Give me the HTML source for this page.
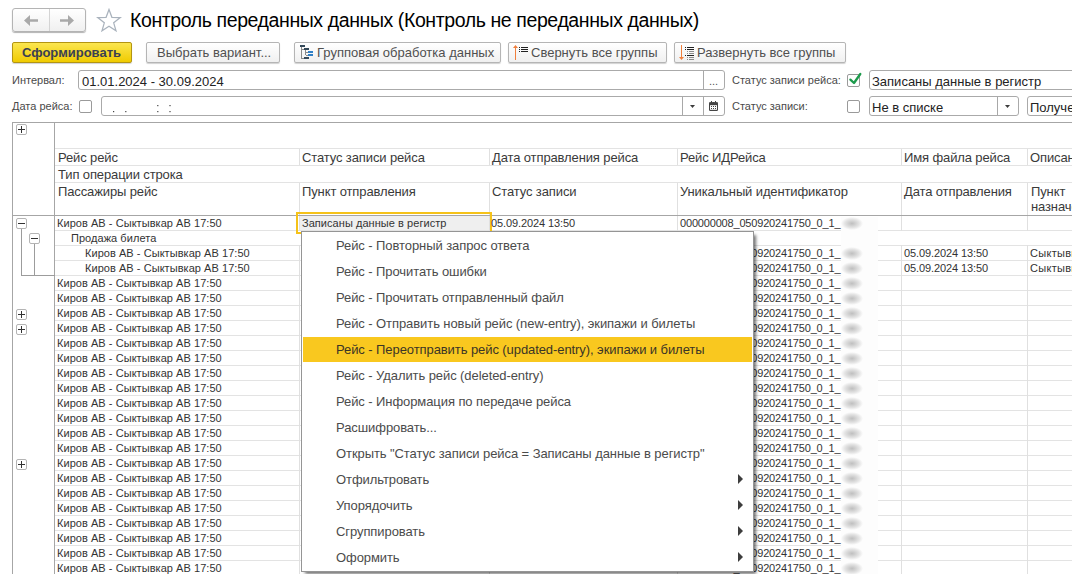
<!DOCTYPE html>
<html><head><meta charset="utf-8">
<style>
*{box-sizing:border-box}
html,body{margin:0;padding:0;background:#fff}
body{width:1072px;height:574px;overflow:hidden;position:relative;font-family:"Liberation Sans",sans-serif;color:#333}
.a{position:absolute}
.t{position:absolute;white-space:nowrap}
.btn{position:absolute;top:42px;height:21px;border:1px solid #b5b5b5;border-radius:2px;background:linear-gradient(#fff,#f0f0f0);box-shadow:0 1px 1px rgba(0,0,0,.18);font-size:13px;line-height:19px;color:#505050;white-space:nowrap}
.fld{position:absolute;border:1px solid #aaa;border-radius:3px;background:#fff;height:20px}
.lbl{position:absolute;font-size:11px;color:#4a4a4a;white-space:nowrap;line-height:13px}
.cb{position:absolute;width:13px;height:13px;border:1px solid #9a9a9a;border-radius:2px;background:#fff}
.hl{position:absolute;height:1px;background:#e0e0e0}
.vl{position:absolute;width:1px;background:#e0e0e0}
.row{position:absolute;left:57px;font-size:11px;line-height:15px;color:#333;white-space:nowrap}
.mi{position:absolute;left:336px;font-size:13px;line-height:26px;color:#4a4a4a;white-space:nowrap}

.pb{position:absolute;width:11px;height:11px;border:1px solid #b4b4b4;border-radius:2px;background:#fff}
.pb:before{content:"";position:absolute;left:1px;top:4px;width:7px;height:1px;background:#333}
.pb.p:after{content:"";position:absolute;left:4px;top:1px;width:1px;height:7px;background:#333}
.ht{position:absolute;font-size:13px;line-height:16px;color:#3a3a3a;white-space:nowrap;letter-spacing:-0.12px}
.bt{position:absolute;font-size:11px;line-height:15px;color:#333;white-space:nowrap;letter-spacing:0.05px}
.blob{position:absolute;left:841px;width:22px;height:13px;background:radial-gradient(closest-side,rgba(170,170,170,.75),rgba(170,170,170,.3) 65%,rgba(170,170,170,0))}

.menu{position:absolute;left:301px;top:231px;width:453px;height:341px;border:1px solid #959595;background:#fff;box-shadow:3px 3px 3px -1px rgba(0,0,0,.55)}
.mi{position:absolute;left:336px;font-size:13px;line-height:26px;color:#4b4b4b;white-space:nowrap;letter-spacing:-0.08px}
.arr{position:absolute;left:738px;width:0;height:0;border-left:5px solid #3d3d3d;border-top:5px solid transparent;border-bottom:5px solid transparent}
</style></head><body>

<!-- nav buttons -->
<div class="a" style="left:12px;top:8px;width:74px;height:24px;border:1px solid #b4b4b4;border-radius:3px;background:linear-gradient(#fff,#f0f0f0);box-shadow:0 1px 1px rgba(0,0,0,.3)"></div>
<div class="a" style="left:49px;top:9px;width:1px;height:22px;background:#d4d4d4"></div>
<svg class="a" style="left:0;top:0" width="90" height="40"><path d="M24 20.5 L30 15 L30 19.2 L38 19.2 L38 21.8 L30 21.8 L30 26 Z" fill="#a9a9a9"/><path d="M74 20.5 L68 15 L68 19.2 L60 19.2 L60 21.8 L68 21.8 L68 26 Z" fill="#a9a9a9"/></svg>
<!-- star -->
<svg class="a" style="left:96px;top:8px" width="26" height="24" viewBox="0 0 26 24"><path d="M13 1.5 L15.9 9.3 L24.3 9.6 L17.7 14.8 L20 22.8 L13 18.2 L6 22.8 L8.3 14.8 L1.7 9.6 L10.1 9.3 Z" fill="none" stroke="#aab3bd" stroke-width="1.25"/></svg>
<div class="t" style="left:130px;top:9px;font-size:19.5px;line-height:22px;color:#000;letter-spacing:-0.4px">Контроль переданных данных (Контроль не переданных данных)</div>

<!-- toolbar -->
<div class="btn" style="left:12px;width:120px;border-color:#b39512;background:linear-gradient(#fbe650,#f0cb00);font-weight:bold;color:#3a4052;padding-left:9px">Сформировать</div>
<div class="btn" style="left:146px;width:134px;padding-left:10px">Выбрать вариант...</div>
<div class="btn" style="left:294px;width:207px;padding-left:22px">Групповая обработка данных</div>
<div class="btn" style="left:508px;width:159px;padding-left:22px">Свернуть все группы</div>
<div class="btn" style="left:674px;width:172px;padding-left:22px">Развернуть все группы</div>

<!-- toolbar icons -->
<svg class="a" style="left:0;top:0" width="700" height="64" shape-rendering="crispEdges">
<g fill="#8a8a8a"><rect x="301" y="47" width="1" height="11"/><rect x="301" y="58" width="3" height="1"/><rect x="302" y="49" width="2" height="1"/><rect x="305" y="50" width="1" height="5"/><rect x="306" y="52" width="2" height="1"/><rect x="306" y="55" width="2" height="1"/></g>
<g fill="#34495a"><rect x="300" y="45" width="5" height="2"/><rect x="304" y="48" width="5" height="2"/><rect x="304" y="57" width="5" height="2"/></g>
<g fill="#2f7fc6"><rect x="308" y="51" width="5" height="2"/><rect x="308" y="54" width="5" height="2"/></g>
<g fill="#222"><rect x="519" y="47" width="1" height="1"/><rect x="521" y="47" width="7" height="1"/><rect x="519" y="49" width="1" height="1"/><rect x="521" y="49" width="7" height="1"/><rect x="519" y="51" width="1" height="1"/><rect x="521" y="51" width="7" height="1"/>
<rect x="685" y="47" width="1" height="1"/><rect x="687" y="47" width="7" height="1"/><rect x="685" y="49" width="1" height="1"/><rect x="687" y="49" width="7" height="1"/><rect x="685" y="55" width="1" height="1"/><rect x="687" y="55" width="7" height="1"/></g>
<g fill="#8c8c8c"><rect x="687" y="51" width="1" height="1"/><rect x="689" y="51" width="5" height="1"/><rect x="687" y="53" width="1" height="1"/><rect x="689" y="53" width="5" height="1"/><rect x="687" y="57" width="1" height="1"/><rect x="689" y="57" width="5" height="1"/><rect x="687" y="59" width="1" height="1"/><rect x="689" y="59" width="5" height="1"/></g>
<g fill="#f07f3c"><rect x="515" y="47" width="1" height="13"/><rect x="681" y="45" width="1" height="13"/></g>
</svg>
<svg class="a" style="left:0;top:0" width="700" height="64"><path d="M515.5 45 L518 48 L513 48 Z" fill="#f07f3c"/><path d="M681.5 60 L684 57 L679 57 Z" fill="#f07f3c"/></svg>
<!-- filters -->
<div class="lbl" style="left:12px;top:74px">Интервал:</div>
<div class="fld" style="left:78px;top:70px;width:647px"></div>
<div class="a" style="left:703px;top:71px;width:1px;height:18px;background:#a8a8a8"></div>
<div class="t" style="left:82px;top:74px;font-size:13px;line-height:15px;color:#222">01.01.2024 - 30.09.2024</div>
<div class="t" style="left:709px;top:75px;font-size:11px;line-height:13px;color:#555">...</div>

<div class="lbl" style="left:12px;top:100px">Дата рейса:</div>
<div class="cb" style="left:79px;top:100px"></div>
<div class="fld" style="left:101px;top:96px;width:624px"></div>
<svg class="a" style="left:100px;top:100px" width="80" height="16" fill="#444"><rect x="13" y="11" width="1.2" height="1.2"/><rect x="25.2" y="11" width="1.2" height="1.2"/><rect x="57.2" y="5" width="1.2" height="1.2"/><rect x="57.2" y="11" width="1.2" height="1.2"/><rect x="69.4" y="5" width="1.2" height="1.2"/><rect x="69.4" y="11" width="1.2" height="1.2"/></svg>
<div class="a" style="left:682px;top:97px;width:1px;height:18px;background:#a8a8a8"></div>
<div class="a" style="left:703px;top:97px;width:1px;height:18px;background:#a8a8a8"></div>

<div class="lbl" style="left:732px;top:74px">Статус записи рейса:</div>
<div class="cb" style="left:847px;top:74px"></div>
<div class="fld" style="left:869px;top:70px;width:220px"></div>
<div class="t" style="left:872px;top:74px;font-size:13px;line-height:15px;color:#222">Записаны данные в регистр</div>

<div class="lbl" style="left:732px;top:100px">Статус записи:</div>
<div class="cb" style="left:847px;top:100px"></div>
<div class="fld" style="left:869px;top:96px;width:150px"></div>
<div class="a" style="left:997px;top:97px;width:1px;height:18px;background:#a8a8a8"></div>
<div class="t" style="left:872px;top:100px;font-size:13px;line-height:15px;color:#222">Не в списке</div>
<div class="fld" style="left:1027px;top:96px;width:80px"></div>
<div class="t" style="left:1030px;top:100px;font-size:13px;line-height:15px;color:#222">Получено</div>

<!-- field icons -->
<svg class="a" style="left:680px;top:60px" width="200" height="60">
<path d="M10 45 L15 45 L12.5 48 Z" fill="#3c3c3c"/>
<g transform="translate(29,40)" fill="#444"><rect x="0" y="2" width="9" height="9" rx="1.2"/><rect x="1" y="5.2" width="7" height="4.6" fill="#fff"/><rect x="1.9" y="0.6" width="1.2" height="2.4" fill="#fff"/><rect x="5.9" y="0.6" width="1.2" height="2.4" fill="#fff"/><rect x="2" y="1" width="1" height="2"/><rect x="6" y="1" width="1" height="2"/>
<rect x="2" y="6" width="1" height="1"/><rect x="4" y="6" width="1" height="1"/><rect x="6" y="6" width="1" height="1"/><rect x="2" y="8" width="1" height="1"/><rect x="4" y="8" width="1" height="1"/><rect x="6" y="8" width="1" height="1"/></g>
<polyline points="170.4,19.6 174,23 180.3,14" fill="none" stroke="#1d9b4c" stroke-width="2.3" stroke-linecap="round" stroke-linejoin="round"/>
</svg>
<svg class="a" style="left:990px;top:96px" width="30" height="20"><path d="M15 9 L20 9 L17.5 12 Z" fill="#3c3c3c"/></svg>
<!-- table -->
<div class="a" style="left:12px;top:122px;width:1060px;height:1px;background:#a6a6a6"></div>
<div class="a" style="left:12px;top:122px;width:1px;height:452px;background:#a6a6a6"></div>
<div class="a" style="left:54px;top:122px;width:1px;height:452px;background:#a6a6a6"></div>
<div class="pb p" style="left:16px;top:124px"></div>
<div class="a" style="left:55px;top:148px;width:1017px;height:35px;border-top:1px solid #e3e3e3;border-bottom:1px solid #e3e3e3"></div>
<div class="a" style="left:55px;top:165px;width:1017px;height:1px;background:#e3e3e3"></div>
<div class="vl" style="left:299px;top:149px;height:16px"></div>
<div class="vl" style="left:299px;top:183px;height:32px"></div>
<div class="vl" style="left:489px;top:149px;height:16px"></div>
<div class="vl" style="left:489px;top:183px;height:32px"></div>
<div class="vl" style="left:677px;top:149px;height:16px"></div>
<div class="vl" style="left:677px;top:183px;height:32px"></div>
<div class="vl" style="left:901px;top:149px;height:16px"></div>
<div class="vl" style="left:901px;top:183px;height:32px"></div>
<div class="vl" style="left:1027px;top:149px;height:16px"></div>
<div class="vl" style="left:1027px;top:183px;height:32px"></div>
<div class="ht" style="left:58px;top:150px">Рейс рейс</div>
<div class="ht" style="left:58px;top:184px">Пассажиры рейс</div>
<div class="ht" style="left:302px;top:150px">Статус записи рейса</div>
<div class="ht" style="left:302px;top:184px">Пункт отправления</div>
<div class="ht" style="left:492px;top:150px">Дата отправления рейса</div>
<div class="ht" style="left:492px;top:184px">Статус записи</div>
<div class="ht" style="left:680px;top:150px">Рейс ИДРейса</div>
<div class="ht" style="left:680px;top:184px">Уникальный идентификатор</div>
<div class="ht" style="left:904px;top:150px">Имя файла рейса</div>
<div class="ht" style="left:904px;top:184px">Дата отправления</div>
<div class="ht" style="left:1030px;top:150px">Описание рейса</div>
<div class="ht" style="left:1031px;top:184px">Пункт</div><div class="ht" style="left:1031px;top:199px">назначения</div>
<div class="ht" style="left:58px;top:167px">Тип операции строка</div>
<div class="a" style="left:55px;top:216px;width:1017px;height:358px;background:repeating-linear-gradient(to bottom,transparent 0 14px,#e3e3e3 14px 15px)"></div>
<div class="vl" style="left:299px;top:216px;height:358px"></div>
<div class="vl" style="left:489px;top:216px;height:358px"></div>
<div class="vl" style="left:677px;top:216px;height:358px"></div>
<div class="vl" style="left:901px;top:216px;height:358px"></div>
<div class="vl" style="left:1027px;top:216px;height:358px"></div>
<div class="a" style="left:55px;top:231px;width:1017px;height:14px;background:#fff"></div>
<div class="a" style="left:841px;top:217px;width:37px;height:357px;background:#fdfdfd"></div>
<div class="a" style="left:12px;top:215px;width:1060px;height:1px;background:#a6a6a6"></div>
<div class="a" style="left:21px;top:228px;width:1px;height:48px;background:#9c9c9c"></div>
<div class="a" style="left:34px;top:243px;width:1px;height:33px;background:#9c9c9c"></div>
<div class="a" style="left:21px;top:275px;width:34px;height:1px;background:#9c9c9c"></div>
<div class="pb" style="left:16px;top:218px"></div>
<div class="pb" style="left:29px;top:233px"></div>
<div class="pb p" style="left:16px;top:309px"></div>
<div class="pb p" style="left:16px;top:324px"></div>
<div class="pb p" style="left:16px;top:459px"></div>
<div class="a" style="left:300px;top:216px;width:189px;height:14px;background:#efefef"></div>
<div class="a" style="left:296px;top:212px;width:196px;height:22px;border:2px solid #f5c219"></div>
<div class="a" style="left:298px;top:215px;width:192px;height:1px;background:#a6a6a6"></div>
<div class="bt" style="left:57px;top:216px">Киров АВ - Сыктывкар АВ 17:50</div>
<div class="bt" style="left:680px;top:216px;letter-spacing:-0.18px">000000008_050920241750_0_1_</div>
<div class="blob" style="top:217px"></div>
<div class="bt" style="left:71px;top:231px">Продажа билета</div>
<div class="bt" style="left:85px;top:246px">Киров АВ - Сыктывкар АВ 17:50</div>
<div class="bt" style="left:680px;top:246px;letter-spacing:-0.18px">000000008_050920241750_0_1_</div>
<div class="blob" style="top:247px"></div>
<div class="bt" style="left:904px;top:246px;letter-spacing:-0.1px">05.09.2024 13:50</div>
<div class="bt" style="left:1030px;top:246px;letter-spacing:0.3px">Сыктывкар АВ</div>
<div class="bt" style="left:85px;top:261px">Киров АВ - Сыктывкар АВ 17:50</div>
<div class="bt" style="left:680px;top:261px;letter-spacing:-0.18px">000000008_050920241750_0_1_</div>
<div class="blob" style="top:262px"></div>
<div class="bt" style="left:904px;top:261px;letter-spacing:-0.1px">05.09.2024 13:50</div>
<div class="bt" style="left:1030px;top:261px;letter-spacing:0.3px">Сыктывкар АВ</div>
<div class="bt" style="left:57px;top:276px">Киров АВ - Сыктывкар АВ 17:50</div>
<div class="bt" style="left:680px;top:276px;letter-spacing:-0.18px">000000008_050920241750_0_1_</div>
<div class="blob" style="top:277px"></div>
<div class="bt" style="left:57px;top:291px">Киров АВ - Сыктывкар АВ 17:50</div>
<div class="bt" style="left:680px;top:291px;letter-spacing:-0.18px">000000008_050920241750_0_1_</div>
<div class="blob" style="top:292px"></div>
<div class="bt" style="left:57px;top:306px">Киров АВ - Сыктывкар АВ 17:50</div>
<div class="bt" style="left:680px;top:306px;letter-spacing:-0.18px">000000008_050920241750_0_1_</div>
<div class="blob" style="top:307px"></div>
<div class="bt" style="left:57px;top:321px">Киров АВ - Сыктывкар АВ 17:50</div>
<div class="bt" style="left:680px;top:321px;letter-spacing:-0.18px">000000008_050920241750_0_1_</div>
<div class="blob" style="top:322px"></div>
<div class="bt" style="left:57px;top:336px">Киров АВ - Сыктывкар АВ 17:50</div>
<div class="bt" style="left:680px;top:336px;letter-spacing:-0.18px">000000008_050920241750_0_1_</div>
<div class="blob" style="top:337px"></div>
<div class="bt" style="left:57px;top:351px">Киров АВ - Сыктывкар АВ 17:50</div>
<div class="bt" style="left:680px;top:351px;letter-spacing:-0.18px">000000008_050920241750_0_1_</div>
<div class="blob" style="top:352px"></div>
<div class="bt" style="left:57px;top:366px">Киров АВ - Сыктывкар АВ 17:50</div>
<div class="bt" style="left:680px;top:366px;letter-spacing:-0.18px">000000008_050920241750_0_1_</div>
<div class="blob" style="top:367px"></div>
<div class="bt" style="left:57px;top:381px">Киров АВ - Сыктывкар АВ 17:50</div>
<div class="bt" style="left:680px;top:381px;letter-spacing:-0.18px">000000008_050920241750_0_1_</div>
<div class="blob" style="top:382px"></div>
<div class="bt" style="left:57px;top:396px">Киров АВ - Сыктывкар АВ 17:50</div>
<div class="bt" style="left:680px;top:396px;letter-spacing:-0.18px">000000008_050920241750_0_1_</div>
<div class="blob" style="top:397px"></div>
<div class="bt" style="left:57px;top:411px">Киров АВ - Сыктывкар АВ 17:50</div>
<div class="bt" style="left:680px;top:411px;letter-spacing:-0.18px">000000008_050920241750_0_1_</div>
<div class="blob" style="top:412px"></div>
<div class="bt" style="left:57px;top:426px">Киров АВ - Сыктывкар АВ 17:50</div>
<div class="bt" style="left:680px;top:426px;letter-spacing:-0.18px">000000008_050920241750_0_1_</div>
<div class="blob" style="top:427px"></div>
<div class="bt" style="left:57px;top:441px">Киров АВ - Сыктывкар АВ 17:50</div>
<div class="bt" style="left:680px;top:441px;letter-spacing:-0.18px">000000008_050920241750_0_1_</div>
<div class="blob" style="top:442px"></div>
<div class="bt" style="left:57px;top:456px">Киров АВ - Сыктывкар АВ 17:50</div>
<div class="bt" style="left:680px;top:456px;letter-spacing:-0.18px">000000008_050920241750_0_1_</div>
<div class="blob" style="top:457px"></div>
<div class="bt" style="left:57px;top:471px">Киров АВ - Сыктывкар АВ 17:50</div>
<div class="bt" style="left:680px;top:471px;letter-spacing:-0.18px">000000008_050920241750_0_1_</div>
<div class="blob" style="top:472px"></div>
<div class="bt" style="left:57px;top:486px">Киров АВ - Сыктывкар АВ 17:50</div>
<div class="bt" style="left:680px;top:486px;letter-spacing:-0.18px">000000008_050920241750_0_1_</div>
<div class="blob" style="top:487px"></div>
<div class="bt" style="left:57px;top:501px">Киров АВ - Сыктывкар АВ 17:50</div>
<div class="bt" style="left:680px;top:501px;letter-spacing:-0.18px">000000008_050920241750_0_1_</div>
<div class="blob" style="top:502px"></div>
<div class="bt" style="left:57px;top:516px">Киров АВ - Сыктывкар АВ 17:50</div>
<div class="bt" style="left:680px;top:516px;letter-spacing:-0.18px">000000008_050920241750_0_1_</div>
<div class="blob" style="top:517px"></div>
<div class="bt" style="left:57px;top:531px">Киров АВ - Сыктывкар АВ 17:50</div>
<div class="bt" style="left:680px;top:531px;letter-spacing:-0.18px">000000008_050920241750_0_1_</div>
<div class="blob" style="top:532px"></div>
<div class="bt" style="left:57px;top:546px">Киров АВ - Сыктывкар АВ 17:50</div>
<div class="bt" style="left:680px;top:546px;letter-spacing:-0.18px">000000008_050920241750_0_1_</div>
<div class="blob" style="top:547px"></div>
<div class="bt" style="left:57px;top:561px">Киров АВ - Сыктывкар АВ 17:50</div>
<div class="bt" style="left:680px;top:561px;letter-spacing:-0.18px">000000008_050920241750_0_1_</div>
<div class="blob" style="top:562px"></div>
<div class="bt" style="left:302px;top:216px">Записаны данные в регистр</div>
<div class="bt" style="left:491px;top:216px;letter-spacing:-0.1px">05.09.2024 13:50</div>

<!-- menu -->
<div class="menu"></div>
<div class="a" style="left:303px;top:337px;width:449px;height:25px;background:#f9c81f"></div>
<div class="mi" style="top:233px">Рейс - Повторный запрос ответа</div>
<div class="mi" style="top:259px">Рейс - Прочитать ошибки</div>
<div class="mi" style="top:285px">Рейс - Прочитать отправленный файл</div>
<div class="mi" style="top:311px">Рейс - Отправить новый рейс (new-entry), экипажи и билеты</div>
<div class="mi" style="top:337px;color:#3b3526">Рейс - Переотправить рейс (updated-entry), экипажи и билеты</div>
<div class="mi" style="top:363px">Рейс - Удалить рейс (deleted-entry)</div>
<div class="mi" style="top:389px">Рейс - Информация по передаче рейса</div>
<div class="mi" style="top:415px">Расшифровать...</div>
<div class="mi" style="top:441px">Открыть "Статус записи рейса = Записаны данные в регистр"</div>
<div class="mi" style="top:467px">Отфильтровать</div>
<div class="arr" style="top:474px"></div>
<div class="mi" style="top:493px">Упорядочить</div>
<div class="arr" style="top:500px"></div>
<div class="mi" style="top:519px">Сгруппировать</div>
<div class="arr" style="top:526px"></div>
<div class="mi" style="top:545px">Оформить</div>
<div class="arr" style="top:552px"></div>
</body></html>
